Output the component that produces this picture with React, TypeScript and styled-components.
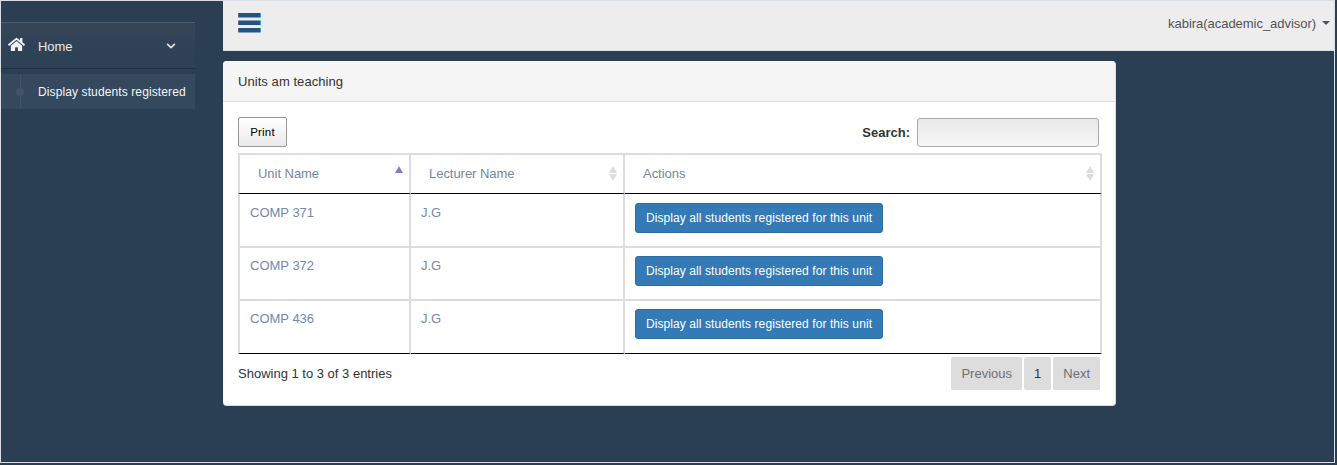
import React from "react";
import styled, { createGlobalStyle } from "styled-components";
import { FaHome, FaChevronDown } from "react-icons/fa";

const Global = createGlobalStyle`
  html, body { margin: 0; padding: 0; background: #2a3f54; height: 465px; overflow: hidden; }
  * { box-sizing: border-box; }
  body { font-family: "Liberation Sans", Arial, sans-serif; font-size: 13px; color: #333; }
`;

const Frame = styled.div`
  width: 1335px;
  height: 463px;
  border: 1px solid #d9dee4;
  display: flex;
  background: #2a3f54;
`;
const Sidebar = styled.aside`
  width: 222px;
  flex: none;
  padding-top: 21px;
`;
const Menu = styled.ul`
  list-style: none;
  margin: 0;
  padding: 0;
  width: 194px;
`;
const HomeItem = styled.li`
  height: 47px;
  display: flex;
  align-items: center;
  color: #e7e7e7;
  border-top: 1px solid #4b5b6b;
  border-bottom: 1px solid #23313f;
  background: linear-gradient(#344556, #2c4156);
  padding: 2px 19px 0 7px;
  letter-spacing: -0.1px;
`;
const HomeIcon = styled(FaHome)`
  width: 17px;
  height: 17px;
  color: #f2f2f2;
  margin: -4px 13px 0 0;
  flex: none;
`;
const ItemLabel = styled.span`
  flex: 1;
`;
const Chevron = styled(FaChevronDown)`
  width: 10px;
  height: 10px;
  color: #e7e7e7;
  margin-top: -1px;
`;
const SubMenu = styled.ul`
  list-style: none;
  margin: 5px 0 0;
  padding: 0;
`;
const SubItem = styled.li`
  position: relative;
  height: 35px;
  padding-left: 37px;
  background: #34495e;
  color: #f4f5f6;
  font-size: 12px;
  line-height: 37px;
  letter-spacing: 0.11px;
  &::before {
    content: "";
    position: absolute;
    left: 19px;
    top: 0;
    bottom: 0;
    width: 1px;
    background: #425568;
  }
  &::after {
    content: "";
    position: absolute;
    left: 15px;
    top: 14px;
    width: 8px;
    height: 8px;
    border-radius: 50%;
    background: #425568;
  }
`;
const Main = styled.main`
  flex: 1;
  min-width: 0;
`;
const TopBar = styled.header`
  height: 50px;
  background: #ededed;
  border-bottom: 1px solid #d9dee4;
  display: flex;
  align-items: center;
  justify-content: space-between;
  padding: 0 4px 0 15px;
`;
const MenuIcon = styled.svg`
  width: 23px;
  height: 20px;
  margin-top: -5px;
  display: block;
`;
const UserMenu = styled.div`
  display: flex;
  align-items: center;
  gap: 6px;
  color: #515356;
  margin-top: -5px;
  letter-spacing: -0.04px;
`;
const Caret = styled.span`
  width: 0;
  height: 0;
  border-left: 4px solid transparent;
  border-right: 4px solid transparent;
  border-top: 4px solid #515356;
`;
const Card = styled.section`
  width: 893px;
  height: 345px;
  margin-top: 10px;
  background: #fff;
  border-radius: 4px;
  border: 1px solid #ddd;
  border-width: 0 1px 1px 0;
  overflow: hidden;
`;
const CardHeading = styled.div`
  height: 41px;
  padding-left: 15px;
  line-height: 42px;
  background: #f5f5f5;
  border-bottom: 1px solid #ddd;
  color: #333;
  letter-spacing: 0.06px;
`;
const CardBody = styled.div`
  padding: 15px 0 0 15px;
`;
const Toolbar = styled.div`
  display: flex;
  align-items: center;
  justify-content: space-between;
  width: 861px;
  height: 30px;
`;
const PrintButton = styled.button`
  width: 49px;
  height: 30px;
  padding: 0;
  font: 11.5px "Liberation Sans", Arial, sans-serif;
  letter-spacing: 0.2px;
  color: #000;
  background: linear-gradient(#fff, #e9e9e9);
  border: 1px solid #999;
  border-radius: 2px;
`;
const SearchLabel = styled.label`
  display: flex;
  align-items: center;
  gap: 7px;
  font-weight: 700;
  color: #333;
`;
const SearchInput = styled.input`
  width: 182px;
  height: 29px;
  padding: 0 5px;
  margin-top: 1px;
  border: 1px solid #a9a9a9;
  border-radius: 3px;
  background: linear-gradient(#e9e9e9, #f6f6f6);
`;
const Table = styled.table`
  width: 864px;
  margin-top: 6px;
  table-layout: fixed;
  border-collapse: separate;
  border-spacing: 0;
  color: #7189ae;
`;
const HeadCell = styled.th`
  position: relative;
  height: 41px;
  padding: 0 0 2px 18px;
  text-align: left;
  font-weight: 400;
  color: #7387a3;
  letter-spacing: -0.04px;
  border-top: 2px solid #ddd;
  border-right: 2px solid #ddd;
  border-bottom: 1px solid #000;
  &:first-child { border-left: 2px solid #ddd; }
`;
const SortIcon = styled.svg`
  position: absolute;
  right: 6px;
  top: 11px;
  width: 8px;
  height: 15px;
`;
const BodyCell = styled.td<{ $first?: boolean; $last?: boolean }>`
  height: ${(p) => (p.$first ? "54px" : "53px")};
  padding: ${(p) => (p.$first ? "9px" : "8px")} 10px 0;
  vertical-align: top;
  line-height: 20px;
  border-right: 2px solid #ddd;
  border-bottom: ${(p) => (p.$last ? "1px solid #000" : "2px solid #ddd")};
  &:first-child { border-left: 2px solid #ddd; }
`;
const ActionButton = styled.button`
  display: block;
  width: 248px;
  height: 30px;
  padding: 0;
  font: 12px "Liberation Sans", Arial, sans-serif;
  letter-spacing: 0.09px;
  color: #fff;
  background: #337ab7;
  border: 1px solid #2e6da4;
  border-radius: 3px;
`;
const Footer = styled.div`
  display: flex;
  justify-content: space-between;
  align-items: center;
  width: 862px;
  margin-top: 3px;
  height: 33px;
`;
const Info = styled.div`
  color: #333;
`;
const Pager = styled.div`
  display: flex;
  gap: 2px;
`;
const PageButton = styled.span<{ $active?: boolean }>`
  height: 33px;
  line-height: 33px;
  padding: 0 10px;
  background: #dddddd;
  border-radius: 2px;
  color: ${(p) => (p.$active ? "#333" : "#707070")};
`;

const rows = ["COMP 371", "COMP 372", "COMP 436"];

const Sort = ({ up, active }: { up: string; active?: boolean }) => (
  <SortIcon viewBox="0 0 8 15">
    <path d="M4 0 8 7H0Z" fill={up} />
    {!active && <path d="M4 15 8 8H0Z" fill="#ddd" />}
  </SortIcon>
);

const Bar = ({ y, h }: { y: number; h: number }) => (
  <>
    <rect x="0" y={y} width="1" height={h} fill="#6b5f74" />
    <rect x="1" y={y} width="21" height={h} fill="#26527f" />
    <rect x="22" y={y} width="1" height={h} fill="#35a0dc" />
  </>
);

export default function App() {
  return (
    <>
      <Global />
      <Frame>
        <Sidebar>
          <Menu>
            <HomeItem>
              <HomeIcon />
              <ItemLabel>Home</ItemLabel>
              <Chevron />
            </HomeItem>
            <SubMenu>
              <SubItem>Display students registered</SubItem>
            </SubMenu>
          </Menu>
        </Sidebar>
        <Main>
          <TopBar>
            <MenuIcon viewBox="0 0 23 20">
              <Bar y={0} h={4.5} />
              <Bar y={7.5} h={4.5} />
              <Bar y={15} h={4.5} />
            </MenuIcon>
            <UserMenu>
              kabira(academic_advisor)
              <Caret />
            </UserMenu>
          </TopBar>
          <Card>
            <CardHeading>Units am teaching</CardHeading>
            <CardBody>
              <Toolbar>
                <PrintButton>Print</PrintButton>
                <SearchLabel>
                  Search:
                  <SearchInput />
                </SearchLabel>
              </Toolbar>
              <Table>
                <colgroup>
                  <col style={{ width: 173 }} />
                  <col style={{ width: 214 }} />
                  <col />
                </colgroup>
                <thead>
                  <tr>
                    <HeadCell>
                      Unit Name
                      <Sort up="#7b7bdc" active />
                    </HeadCell>
                    <HeadCell>
                      Lecturer Name
                      <Sort up="#ddd" />
                    </HeadCell>
                    <HeadCell>
                      Actions
                      <Sort up="#ddd" />
                    </HeadCell>
                  </tr>
                </thead>
                <tbody>
                  {rows.map((r, i) => (
                    <tr key={r}>
                      <BodyCell $first={i === 0} $last={i === 2}>{r}</BodyCell>
                      <BodyCell $first={i === 0} $last={i === 2}>J.G</BodyCell>
                      <BodyCell $first={i === 0} $last={i === 2}>
                        <ActionButton>Display all students registered for this unit</ActionButton>
                      </BodyCell>
                    </tr>
                  ))}
                </tbody>
              </Table>
              <Footer>
                <Info>Showing 1 to 3 of 3 entries</Info>
                <Pager>
                  <PageButton>Previous</PageButton>
                  <PageButton $active>1</PageButton>
                  <PageButton>Next</PageButton>
                </Pager>
              </Footer>
            </CardBody>
          </Card>
        </Main>
      </Frame>
    </>
  );
}
